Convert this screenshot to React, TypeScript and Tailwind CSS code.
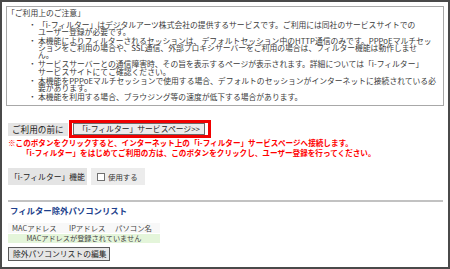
import React from "react";

const jp = "font-['MS_PGothic','Noto_Sans_CJK_JP',sans-serif]";

const notes: string[][] = [
  [
    "「i-フィルター」はデジタルアーツ株式会社の提供するサービスです。ご利用には同社のサービスサイトでの",
    "ユーザー登録が必要です。",
  ],
  [
    "本機能によりフィルターされるセッションは、デフォルトセッション中のHTTP通信のみです。PPPoEマルチセッ",
    "ションをご利用の場合や、SSL通信、外部プロキシサーバーをご利用の場合は、フィルター機能は動作しませ",
    "ん。",
  ],
  [
    "サービスサーバーとの通信障害時、その旨を表示するページが表示されます。詳細については「i-フィルター」",
    "サービスサイトにてご確認ください。",
  ],
  [
    "本機能をPPPoEマルチセッションで使用する場合、デフォルトのセッションがインターネットに接続されている必",
    "要があります。",
  ],
  ["本機能を利用する場合、ブラウジング等の速度が低下する場合があります。"],
];

export default function App() {
  return (
    <div className={`w-[450px] h-[269px] overflow-hidden border-2 border-[#4a4a4a] bg-white ${jp}`}>
      {/* Notice box */}
      <div className="mx-[4px] mt-[4px] h-[100px] border border-[#a8a8a8] text-[#3a3a3a] text-[7.8px]">
        <div className="pt-[1px] leading-[10px] whitespace-nowrap">「ご利用上のご注意」</div>
        <div className="mt-[2.5px] flex flex-col gap-[1.7px]">
          {notes.map((lines, i) => (
            <div key={i} className="flex pl-[20px]">
              <span className="w-[11px] text-center leading-[7.3px]">・</span>
              <div className="flex flex-col">
                {lines.map((l, j) => (
                  <span key={j} className="leading-[7.3px] whitespace-nowrap">
                    {l}
                  </span>
                ))}
              </div>
            </div>
          ))}
        </div>
      </div>

      {/* Service page button */}
      <div className="mt-[14px] ml-[6px] flex items-center h-[18px]">
        <div className="h-[13px] w-[60px] bg-[#e4e4e4] flex items-center pl-[4px] text-[8.6px] text-[#222] whitespace-nowrap">
          ご利用の前に
        </div>
        <div className="ml-[1px] h-[18px] w-[142px] border-[3px] border-[#f00000] pl-[1px] pr-[3px] flex items-center">
          <button className="h-[12px] w-full border border-[#6a6a6a] bg-[#ececec] flex items-center pl-[4px] text-[7.8px] text-[#222] whitespace-nowrap">
            「i-フィルター」サービスページ&gt;&gt;
          </button>
        </div>
      </div>

      {/* Warning */}
      <div className="ml-[6px] text-[#ff0000] font-bold text-[7.6px] leading-[10px] whitespace-nowrap">
        <div>※このボタンをクリックすると、インターネット上の「i-フィルター」サービスページへ接続します。</div>
        <div className="pl-[14px]">「i-フィルター」をはじめてご利用の方は、このボタンをクリックし、ユーザー登録を行ってください。</div>
      </div>

      {/* Filter function */}
      <div className="mt-[10px] ml-[6px] flex h-[17px] gap-[4px]">
        <div className="w-[79px] bg-[#e4e4e4] flex items-center pl-[2px] text-[7.8px] text-[#222] whitespace-nowrap">
          「i-フィルター」機能
        </div>
        <div className="w-[54px] bg-[#ececec] flex items-center pl-[6px] gap-[3px] text-[7.4px] text-[#333] whitespace-nowrap">
          <span className="w-[8px] h-[8px] border border-[#707070] bg-white" />
          使用する
        </div>
      </div>

      <div className="mt-[15px] ml-[6px] mr-[5px] h-[2px] bg-[#c2c2c2]" />

      {/* Exclusion list */}
      <div className="mt-[2px] ml-[8px] leading-[12px] text-[8.4px] font-bold text-[#1d3f8c] whitespace-nowrap">
        フィルター除外パソコンリスト
      </div>

      <div className="mt-[7px] ml-[6px] w-[152px] text-[7.4px] text-[#444]">
        <div className="flex h-[10px] items-center bg-[#f8f8f8] whitespace-nowrap">
          <span className="w-[57px] pl-[4px]">MACアドレス</span>
          <span className="w-[46px] pl-[4px]">IPアドレス</span>
          <span className="pl-[4px]">パソコン名</span>
        </div>
        <div className="mt-[1px] h-[9px] flex items-center justify-center bg-[#e4f5da] text-[7.2px] whitespace-nowrap">
          MACアドレスが登録されていません
        </div>
      </div>

      <button className="mt-[4px] ml-[6px] h-[14px] w-[102px] border border-[#5a5a5a] bg-[#e6e6e6] flex items-center pl-[4px] text-[7.8px] text-[#222] whitespace-nowrap">
        除外パソコンリストの編集
      </button>
    </div>
  );
}
